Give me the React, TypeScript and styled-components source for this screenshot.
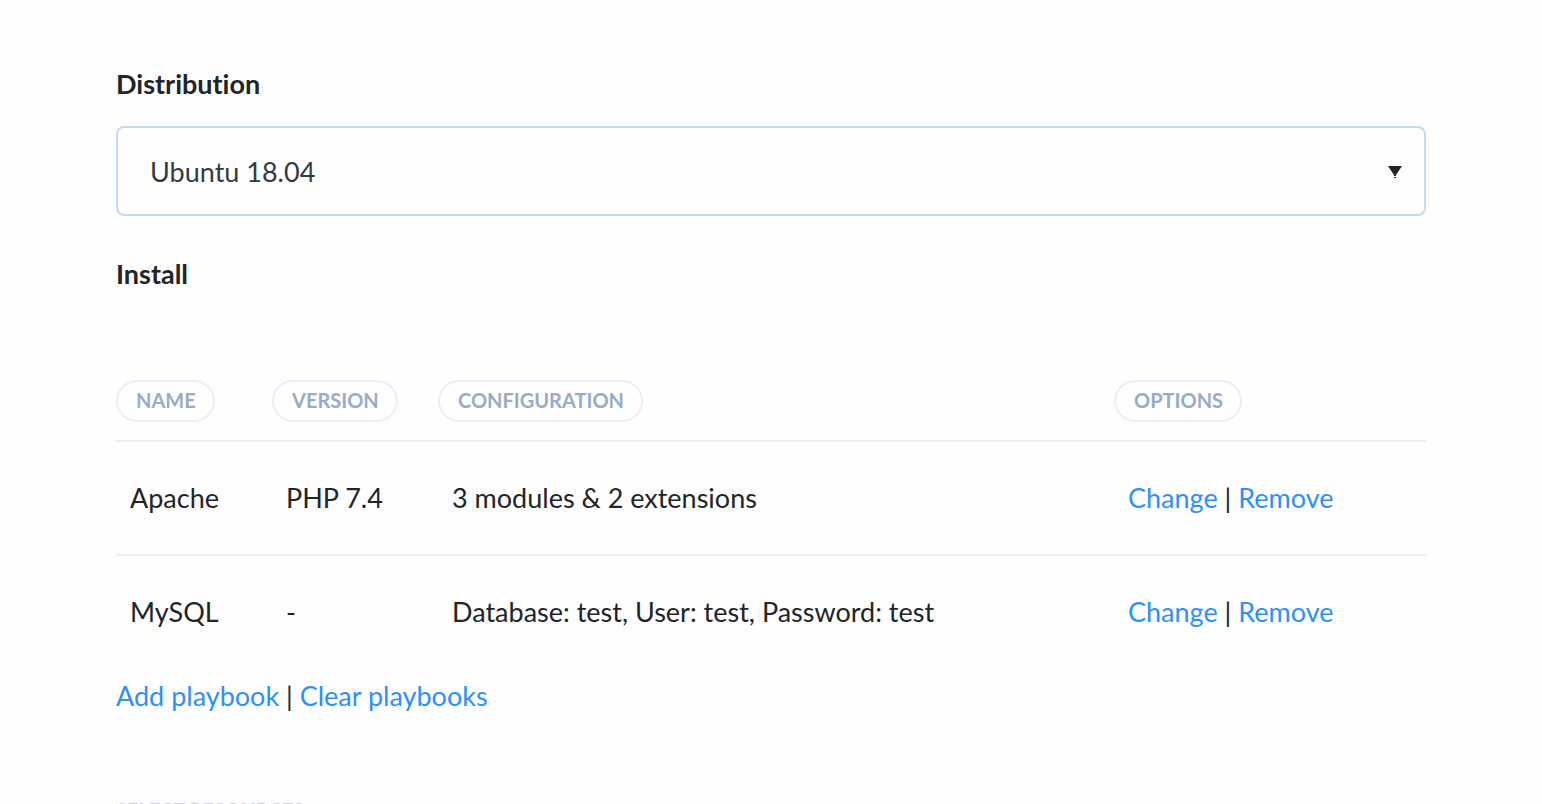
import React from "react";
import styled, { createGlobalStyle } from "styled-components";

const GlobalStyle = createGlobalStyle`
  *, *::before, *::after { box-sizing: border-box; }
  body {
    margin: 0;
    background: #fefefe;
    color: #212529;
    font: 400 27px/42px Lato, "Liberation Sans", sans-serif;
    font-variant-ligatures: none;
  }
`;

const Viewport = styled.div`
  height: 100vh;
  overflow: hidden;
`;

const Page = styled.main`
  padding: 63px 116px;
`;

const Label = styled.label`
  display: block;
  margin-bottom: 21px;
  font-weight: 700;
`;

const SelectWrap = styled.div`
  display: grid;
  align-items: center;
  margin-bottom: 37px;

  & > * { grid-area: 1 / 1; }
`;

const Select = styled.select`
  appearance: none;
  width: 100%;
  height: 90px;
  padding: 2px 32px 0;
  border: 2px solid #c5d9f7;
  border-radius: 8px;
  background: #fefefe;
  color: #373a3c;
  font: inherit;
`;

const Caret = styled.svg`
  justify-self: end;
  margin: 2px 23px 0 0;
  pointer-events: none;
`;

const Heading = styled.h2`
  margin: 0 0 85px;
  font-size: 27px;
  line-height: 42px;
  font-weight: 700;
`;

const Table = styled.table`
  width: 100%;
  table-layout: fixed;
  border-spacing: 0;
  margin-bottom: 7px;
`;

const HeadCell = styled.th<{ $width?: number }>`
  width: ${({ $width }) => ($width ? `${$width}px` : "auto")};
  padding: 0 0 18px;
  border-bottom: 2px solid #e6effb;
  text-align: left;
`;

const Chip = styled.span`
  display: block;
  width: fit-content;
  padding: 0 17px 2px 18px;
  border: 2px solid #e6effb;
  border-radius: 21px;
  color: #9babc5;
  font-size: 20px;
  line-height: 36px;
  text-transform: uppercase;
`;

const Row = styled.tr`
  &:not(:last-child) td { border-bottom: 2px solid #e6effb; }
`;

const Cell = styled.td`
  padding: 35px 14px;
`;

const Link = styled.a`
  color: #2e90fa;
  text-decoration: none;
`;

const Actions = styled.div`
  margin-bottom: 79px;
`;

const SectionLabel = styled.h3`
  margin: 0;
  color: #cfcfd8;
  font-size: 20px;
  line-height: 28px;
  font-weight: 700;
  text-transform: uppercase;
`;

const columns = [
  { title: "Name", width: 156 },
  { title: "Version", width: 166 },
  { title: "Configuration" },
  { title: "Options", width: 312 },
];

const playbooks = [
  { name: "Apache", version: "PHP 7.4", config: "3 modules & 2 extensions" },
  { name: "MySQL", version: "-", config: "Database: test, User: test, Password: test" },
];

export default function App() {
  return (
    <Viewport>
      <GlobalStyle />
      <Page>
        <Label htmlFor="distribution">Distribution</Label>
        <SelectWrap>
          <Select id="distribution" defaultValue="ubuntu-18.04">
            <option value="ubuntu-18.04">Ubuntu 18.04</option>
          </Select>
          <Caret width="16" height="12" viewBox="0 0 16 12" aria-hidden="true">
            <path d="M1 0h14L9 9v1H7V9zM7 11h2v1H7z" fill="#212529" />
          </Caret>
        </SelectWrap>

        <Heading>Install</Heading>
        <Table>
          <thead>
            <tr>
              {columns.map(({ title, width }) => (
                <HeadCell key={title} scope="col" $width={width}>
                  <Chip>{title}</Chip>
                </HeadCell>
              ))}
            </tr>
          </thead>
          <tbody>
            {playbooks.map(({ name, version, config }) => (
              <Row key={name}>
                <Cell>{name}</Cell>
                <Cell>{version}</Cell>
                <Cell>{config}</Cell>
                <Cell>
                  <Link href="#change">Change</Link> | <Link href="#remove">Remove</Link>
                </Cell>
              </Row>
            ))}
          </tbody>
        </Table>
        <Actions>
          <Link href="#add">Add playbook</Link> | <Link href="#clear">Clear playbooks</Link>
        </Actions>
        <SectionLabel>Select resources</SectionLabel>
      </Page>
    </Viewport>
  );
}
